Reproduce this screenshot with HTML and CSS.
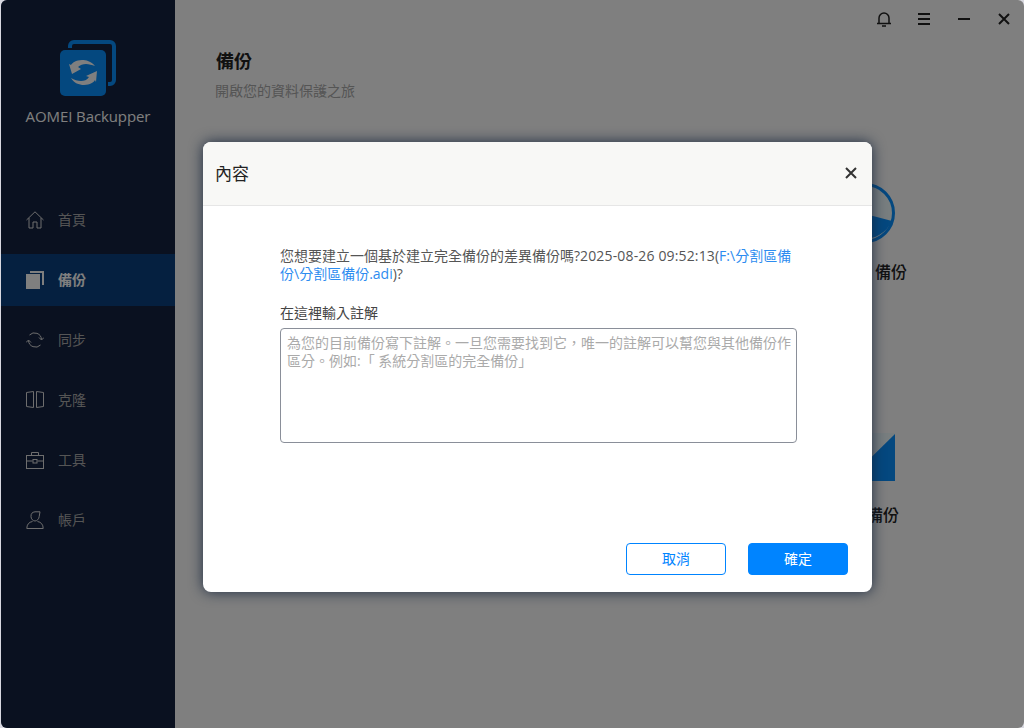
FILE: index.html

```html
<!DOCTYPE html>
<html lang="zh-Hant">
<head>
    <meta charset="UTF-8">
    <title>AOMEI Backupper</title>
    <link rel="stylesheet" href="styles.css">
</head>
<body>

<div class="app">
    <aside class="sidebar">
        <div class="brand">
            <svg class="brand-logo" width="56" height="56" viewBox="0 0 56 56">
                <path d="M10 8V6a4 4 0 0 1 4-4h36a4 4 0 0 1 4 4v34a4 4 0 0 1-4 4h-2" fill="none" stroke="#0890ff" stroke-width="4"/>
                <rect x="0" y="10" width="46" height="46" rx="5" fill="#0890ff"/>
                <path d="M35 26C31 21 26 20 22 20 16 20 12 23 11 25L9 24 12 34 21 29 18 27C20 25 23 24 26 24 29 24 32 25 35 26z" fill="#fff"/>
                <path d="M11 38C14 43 19 45 24 45 30 45 34 42 35 40L36 42 37 31 26 36 29 37C27 40 24 41 21 41 18 41 14 40 11 38z" fill="#fff"/>
            </svg>
            <div class="brand-name">AOMEI Backupper</div>
        </div>
        <nav class="nav">
            <a class="nav-item">
                <svg width="18" height="18" viewBox="0 0 18 18" fill="none" stroke="currentColor"><path d="M.5 9 9 .8 17.500 9M3 7v10h4v-6h4v6h4V7"/></svg>
                <span>首頁</span>
            </a>
            <a class="nav-item active">
                <svg width="18" height="18" viewBox="0 0 18 18" fill="currentColor"><rect y="3" width="14" height="15"/><path d="M4 0h14v14h-2V2H4z"/></svg>
                <span>備份</span>
            </a>
            <a class="nav-item">
                <svg width="18" height="18" viewBox="0 0 18 18" fill="none" stroke="currentColor"><path d="M3.500 4A7 7 0 0 1 15.500 8.500M13 6.500l2.500 2.500 2.500-2.500M14.500 14A7 7 0 0 1 2.500 9.500M0 11.500l2.500-2.500 2.500 2.500"/></svg>
                <span>同步</span>
            </a>
            <a class="nav-item">
                <svg width="18" height="18" viewBox="0 0 18 18" fill="none" stroke="currentColor"><path d="M.5 1.500 7.500 .5v16l-7-1zM17.500 1.500 10.500 .5v16l7-1z"/></svg>
                <span>克隆</span>
            </a>
            <a class="nav-item">
                <svg width="18" height="18" viewBox="0 0 18 18" fill="none" stroke="currentColor"><rect x=".5" y="4.500" width="17" height="13"/><path d="M5.500 4.500v-3h7v3M.5 10h6M11.500 10h6"/><rect x="7" y="8.500" width="4" height="3.500"/></svg>
                <span>工具</span>
            </a>
            <a class="nav-item">
                <svg width="18" height="18" viewBox="0 0 18 18" fill="none" stroke="currentColor"><path d="M14 .8H9a4.500 4.500 0 0 0-4 4.700c0 2.500 2 4.500 4 4.500s4-2 4.200-4.500zM6.500 10.500C3 11 .8 13.500.8 17.500h16.400c0-4-2.200-6.500-5.700-7"/></svg>
                <span>帳戶</span>
            </a>
        </nav>
    </aside>

    <main class="main">
        <div class="titlebar">
            <button class="win-btn">
                <svg width="16" height="16" viewBox="0 0 16 16" fill="none" stroke="currentColor" stroke-width="1.500"><path d="M3 12V7a5 5 0 0 1 10 0v5M1 12.500h14M6 15h4"/></svg>
            </button>
            <button class="win-btn">
                <svg width="14" height="14" viewBox="0 0 14 14" fill="none" stroke="currentColor" stroke-width="2"><path d="M1 2h12M1 7h12M1 12h12"/></svg>
            </button>
            <button class="win-btn">
                <svg width="14" height="14" viewBox="0 0 14 14" fill="none" stroke="currentColor" stroke-width="2"><path d="M1 7h12"/></svg>
            </button>
            <button class="win-btn">
                <svg width="14" height="14" viewBox="0 0 14 14" fill="none" stroke="currentColor" stroke-width="2"><path d="M2 2l10 10M12 2 2 12"/></svg>
            </button>
        </div>

        <header class="page-head">
            <h1>備份</h1>
            <p>開啟您的資料保護之旅</p>
        </header>

        <section class="tiles">
            <div class="tile">
                <div class="tile-icon"></div>
                <div class="tile-label">系統備份</div>
            </div>
            <div class="tile">
                <div class="tile-icon">
                    <svg width="60" height="60" viewBox="0 0 60 60">
                        <circle cx="30" cy="30" r="28.500" fill="#f0fcff" stroke="#0890ff" stroke-width="3"/>
                        <path d="M0 28l38 5 19 5a30 30 0 0 1-57-8z" fill="#0890ff"/>
                    </svg>
                </div>
                <div class="tile-label tile-label-wide">分割區 備份</div>
            </div>
            <div class="tile">
                <div class="tile-icon"></div>
                <div class="tile-label">磁碟備份</div>
            </div>
            <div class="tile">
                <div class="tile-icon">
                    <svg width="60" height="60" viewBox="0 0 60 60">
                        <rect y="7" width="60" height="48" fill="#f0fcff"/>
                        <path d="M60 8v47H12z" fill="#0890ff"/>
                    </svg>
                </div>
                <div class="tile-label">檔案備份</div>
            </div>
        </section>
    </main>

    <div class="overlay">
        <div class="dialog">
            <div class="dialog-head">
                <h2>內容</h2>
                <svg width="16" height="16" viewBox="0 0 16 16" fill="none" stroke="#333" stroke-width="2"><path d="M3 3l10 10M13 3 3 13"/></svg>
            </div>
            <div class="dialog-body">
                <p class="question">您想要建立一個基於建立完全備份的差異備份嗎?<span class="stamp">2025-08-26 09:52:13</span>(<span class="path">F:\分割區備份\分割區備份.adi</span>)?</p>
                <label class="note-label" for="note">在這裡輸入註解</label>
                <textarea id="note" class="note" placeholder="為您的目前備份寫下註解。一旦您需要找到它&#65292;唯一的註解可以幫您與其他備份作區分。例如:「 系統分割區的完全備份」"></textarea>
            </div>
            <div class="dialog-foot">
                <button class="btn btn-outline">取消</button>
                <button class="btn btn-primary">確定</button>
            </div>
        </div>
    </div>
</div>

</body>
</html>
```

FILE: styles.css

```css
body { margin: 0; height: 728px; overflow: hidden; background: #d8d8e0; font-family: "Open Sans", "Noto Sans CJK TC", sans-serif; font-size: 14px; }
h1, h2, p { margin: 0; font-weight: normal; }

.app { position: relative; display: flex; height: 728px; margin-left: 1px; overflow: hidden; border-radius: 6px; background: #fff; }

/* sidebar */
.sidebar { flex: 0 0 174px; background: #142240; color: #aaa; }
.brand { display: flex; flex-direction: column; align-items: center; padding-top: 40px; }
.brand-name { margin-top: 9px; font-size: 15px; line-height: 22px; letter-spacing: -.1px; color: #fff; }
.nav { display: flex; flex-direction: column; gap: 8px; margin-top: 67px; }
.nav-item { display: flex; align-items: center; gap: 14px; height: 52px; padding-left: 25px; }
.nav-item svg { color: #ddd; }
.nav-item span { position: relative; top: -1px; }
.nav-item.active { background: #0a4080; color: #fff; font-weight: bold; }
.nav-item.active svg { color: #fff; }

/* main area */
.main { flex: 1; display: flex; flex-direction: column; }
.titlebar { display: flex; justify-content: flex-end; height: 38px; }
.win-btn { display: flex; align-items: center; justify-content: center; width: 40px; padding: 0; border: none; background: none; color: #222; }
.page-head { padding: 11px 0 0 40px; }
.page-head h1 { margin-left: 1px; font-size: 18px; line-height: 24px; font-weight: bold; color: #222; }
.page-head p { margin-top: 8px; line-height: 20px; color: #aaa; }

.tiles { display: grid; grid-template-columns: 160px 160px; grid-auto-rows: 243px; justify-content: end; margin-top: 82px; padding-right: 77px; }
.tile { display: flex; flex-direction: column; align-items: center; }
.tile-icon { height: 60px; margin-right: 4px; }
.tile-label { margin-top: 17px; font-size: 16px; line-height: 24px; font-weight: 500; color: #222; }
.tile-label-wide { margin-right: 4px; }

/* dialog */
.overlay { position: absolute; inset: 0; padding: 142px 0 0 202px; background: rgba(0, 0, 0, .5); }
.dialog { display: flex; flex-direction: column; width: 669px; height: 450px; background: #fff; border-radius: 8px; box-shadow: 0 0 14px rgba(20, 35, 60, .9); overflow: hidden; }
.dialog-head { display: flex; align-items: center; justify-content: space-between; box-sizing: border-box; height: 64px; padding: 0 13px 2px 12px; background: #f8f8f6; border-bottom: 1px solid #e6e6e6; }
.dialog-head h2 { font-size: 17px; color: #222; }
.dialog-body { display: flex; flex-direction: column; padding: 41px 75px 0 77px; }
.question { line-height: 18px; color: #555; }
.stamp { letter-spacing: .15px; }
.path { color: #2d8cf0; }
.note-label { margin-top: 21px; line-height: 18px; color: #444; }
.note { box-sizing: border-box; height: 115px; margin-top: 6px; padding: 5px 2px 6px 6px; border: 1px solid #8a8f99; border-radius: 4px; font: inherit; line-height: 18px; resize: none; outline: none; }
.note::placeholder { color: #aaa; opacity: 1; line-height: 18px; }
.dialog-foot { display: flex; justify-content: flex-end; gap: 22px; margin-top: auto; padding: 0 24px 17px; }
.btn { width: 100px; height: 32px; padding: 0 0 2px; border: 1px solid #0084ff; border-radius: 4px; font: inherit; }
.btn-outline { background: #fff; color: #0084ff; }
.btn-primary { background: #0084ff; color: #fff; }
```
